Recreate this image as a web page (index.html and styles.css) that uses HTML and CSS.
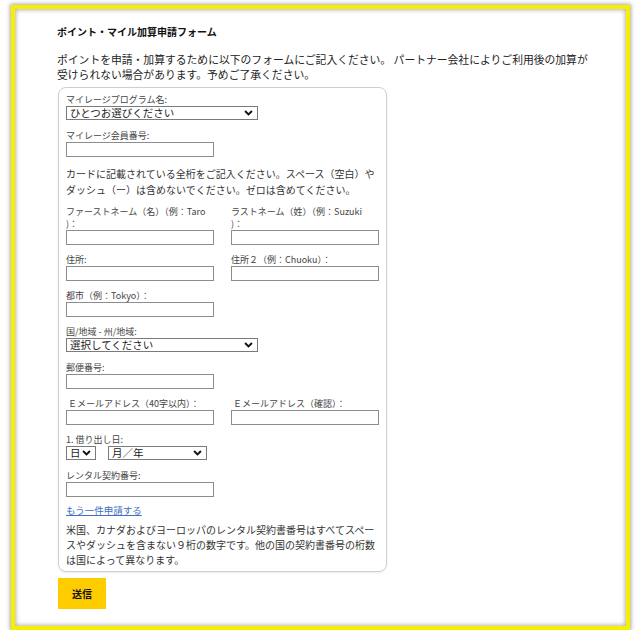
FILE: index.html
```html
<!DOCTYPE html>
<html lang="ja">
<head>
<meta charset="utf-8">
<title>ポイント・マイル加算申請フォーム</title>
<link rel="stylesheet" href="styles.css">
</head>
<body>
<div class="frame">
  <div class="content">
    <h1 class="title">ポイント・マイル加算申請フォーム</h1>
    <p class="intro">ポイントを申請・加算するために以下のフォームにご記入ください。 パートナー会社によりご利用後の加算が受けられない場合があります。予めご了承ください。</p>
    <form class="card">
      <div class="field sel-field">
        <label class="lbl">マイレージプログラム名:</label>
        <div class="select-wrap w192">
          <select class="select"><option>ひとつお選びください</option></select>
          <svg class="chev" viewBox="0 0 10 7" width="9" height="6"><path d="M1 1.2 L5 5.2 L9 1.2" fill="none" stroke="#111" stroke-width="2.2"/></svg>
        </div>
      </div>
      <div class="field">
        <label class="lbl">マイレージ会員番号:</label>
        <input class="input" type="text">
      </div>
      <p class="note">カードに記載されている全桁をご記入ください。スペース（空白）やダッシュ（ー）は含めないでください。ゼロは含めてください。</p>
      <div class="row">
        <div class="field">
          <label class="lbl">ファーストネーム（名）（例：Taro<br>)：</label>
          <input class="input" type="text">
        </div>
        <div class="field">
          <label class="lbl">ラストネーム（姓）（例：Suzuki<br>)：</label>
          <input class="input" type="text">
        </div>
      </div>
      <div class="row">
        <div class="field">
          <label class="lbl">住所:</label>
          <input class="input" type="text">
        </div>
        <div class="field">
          <label class="lbl">住所２（例：Chuoku）：</label>
          <input class="input" type="text">
        </div>
      </div>
      <div class="field">
        <label class="lbl">都市（例：Tokyo）：</label>
        <input class="input" type="text">
      </div>
      <div class="field sel-field">
        <label class="lbl">国/地域 - 州/地域:</label>
        <div class="select-wrap w192">
          <select class="select"><option>選択してください</option></select>
          <svg class="chev" viewBox="0 0 10 7" width="9" height="6"><path d="M1 1.2 L5 5.2 L9 1.2" fill="none" stroke="#111" stroke-width="2.2"/></svg>
        </div>
      </div>
      <div class="field">
        <label class="lbl">郵便番号:</label>
        <input class="input" type="text">
      </div>
      <div class="row">
        <div class="field">
          <label class="lbl indent">Ｅメールアドレス（40字以内）：</label>
          <input class="input" type="text">
        </div>
        <div class="field">
          <label class="lbl indent">Ｅメールアドレス（確認）：</label>
          <input class="input" type="text">
        </div>
      </div>
      <div class="field sel-field">
        <label class="lbl">1. 借り出し日:</label>
        <div class="date-row">
          <div class="select-wrap w30">
            <select class="select"><option>日</option></select>
            <svg class="chev" viewBox="0 0 10 7" width="9" height="6"><path d="M1 1.2 L5 5.2 L9 1.2" fill="none" stroke="#111" stroke-width="2.2"/></svg>
          </div>
          <div class="select-wrap w99">
            <select class="select"><option>月／年</option></select>
            <svg class="chev" viewBox="0 0 10 7" width="9" height="6"><path d="M1 1.2 L5 5.2 L9 1.2" fill="none" stroke="#111" stroke-width="2.2"/></svg>
          </div>
        </div>
      </div>
      <div class="field">
        <label class="lbl">レンタル契約番号:</label>
        <input class="input" type="text">
      </div>
      <a class="more" href="#">もう一件申請する</a>
      <p class="note last">米国、カナダおよびヨーロッパのレンタル契約書番号はすべてスペースやダッシュを含まない９桁の数字です。他の国の契約書番号の桁数は国によって異なります。</p>
    </form>
    <button class="submit" type="button">送信</button>
  </div>
</div>
</body>
</html>
```

FILE: styles.css
```css
html, body {
  margin: 0;
  padding: 0;
  background: #ffffff;
}

body {
  font-family: "Noto Sans CJK JP", "Noto Sans", "Liberation Sans", sans-serif;
  color: #222;
}

.frame {
  box-sizing: border-box;
  margin: 5px 0 0 11px;
  width: 619px;
  height: 625px;
  border: 4px solid #f6f000;
  box-shadow: 0 0 4px 1px rgba(0, 0, 0, 0.35), inset 0 0 4px 1px rgba(0, 0, 0, 0.3);
  background: #fff;
}

.content {
  padding: 16px 0 0 42px;
}

.title {
  margin: 0;
  font-size: 10px;
  line-height: 14px;
  font-weight: 700;
  color: #111;
}

.intro {
  margin: 13px 0 0 0;
  width: 540px;
  font-size: 10.8px;
  line-height: 15px;
  color: #222;
}

.card {
  box-sizing: border-box;
  margin: 5px 0 0 1px;
  width: 329px;
  border: 1px solid #cfcfcf;
  border-radius: 8px;
  padding: 6px 7px 4px 7px;
  box-shadow: 0 1px 2px rgba(0, 0, 0, 0.08);
}

.field {
  display: flex;
  flex-direction: column;
  align-items: flex-start;
  margin-bottom: 9px;
}

.sel-field {
  margin-bottom: 10px;
}

.lbl {
  display: block;
  font-size: 9px;
  line-height: 12px;
  color: #444;
}

.lbl.indent {
  padding-left: 2px;
}

.input {
  display: block;
  box-sizing: border-box;
  width: 148px;
  height: 15px;
  margin: 0;
  border: 1px solid #8d8d8d;
  border-radius: 0;
  padding: 0 3px;
  background: #fff;
}

.row {
  display: grid;
  grid-template-columns: 148px 148px;
  column-gap: 17px;
}

.select-wrap {
  position: relative;
  height: 14px;
}

.w192 { width: 192px; }
.w30 { width: 30px; }
.w99 { width: 99px; }

.select {
  appearance: none;
  -webkit-appearance: none;
  display: block;
  box-sizing: border-box;
  width: 100%;
  height: 14px;
  margin: 0;
  border: 1px solid #7a7a7a;
  border-radius: 0;
  padding: 0 0 0 3px;
  background: #fff;
  font-family: "Noto Sans CJK JP", "Noto Sans", sans-serif;
  font-size: 10.5px;
  line-height: 12px;
  color: #222;
}

.chev {
  position: absolute;
  right: 5px;
  top: 4px;
  pointer-events: none;
}

.date-row {
  display: flex;
  gap: 12px;
}

.note {
  margin: 4px 0 9px 0;
  font-size: 10px;
  line-height: 15.5px;
  color: #333;
}

.note.last {
  margin: 5px 0 0 0;
  line-height: 15px;
}

.more {
  display: block;
  margin-top: -2px;
  font-size: 9.5px;
  line-height: 13px;
  color: #3f6fc0;
  text-decoration: underline;
}

.submit {
  display: block;
  margin: 6px 0 0 1px;
  width: 48px;
  height: 31px;
  border: none;
  border-radius: 0;
  background: #ffcc00;
  font-family: "Noto Sans CJK JP", "Noto Sans", sans-serif;
  font-size: 10px;
  font-weight: 700;
  color: #111;
  padding: 0;
}
```
